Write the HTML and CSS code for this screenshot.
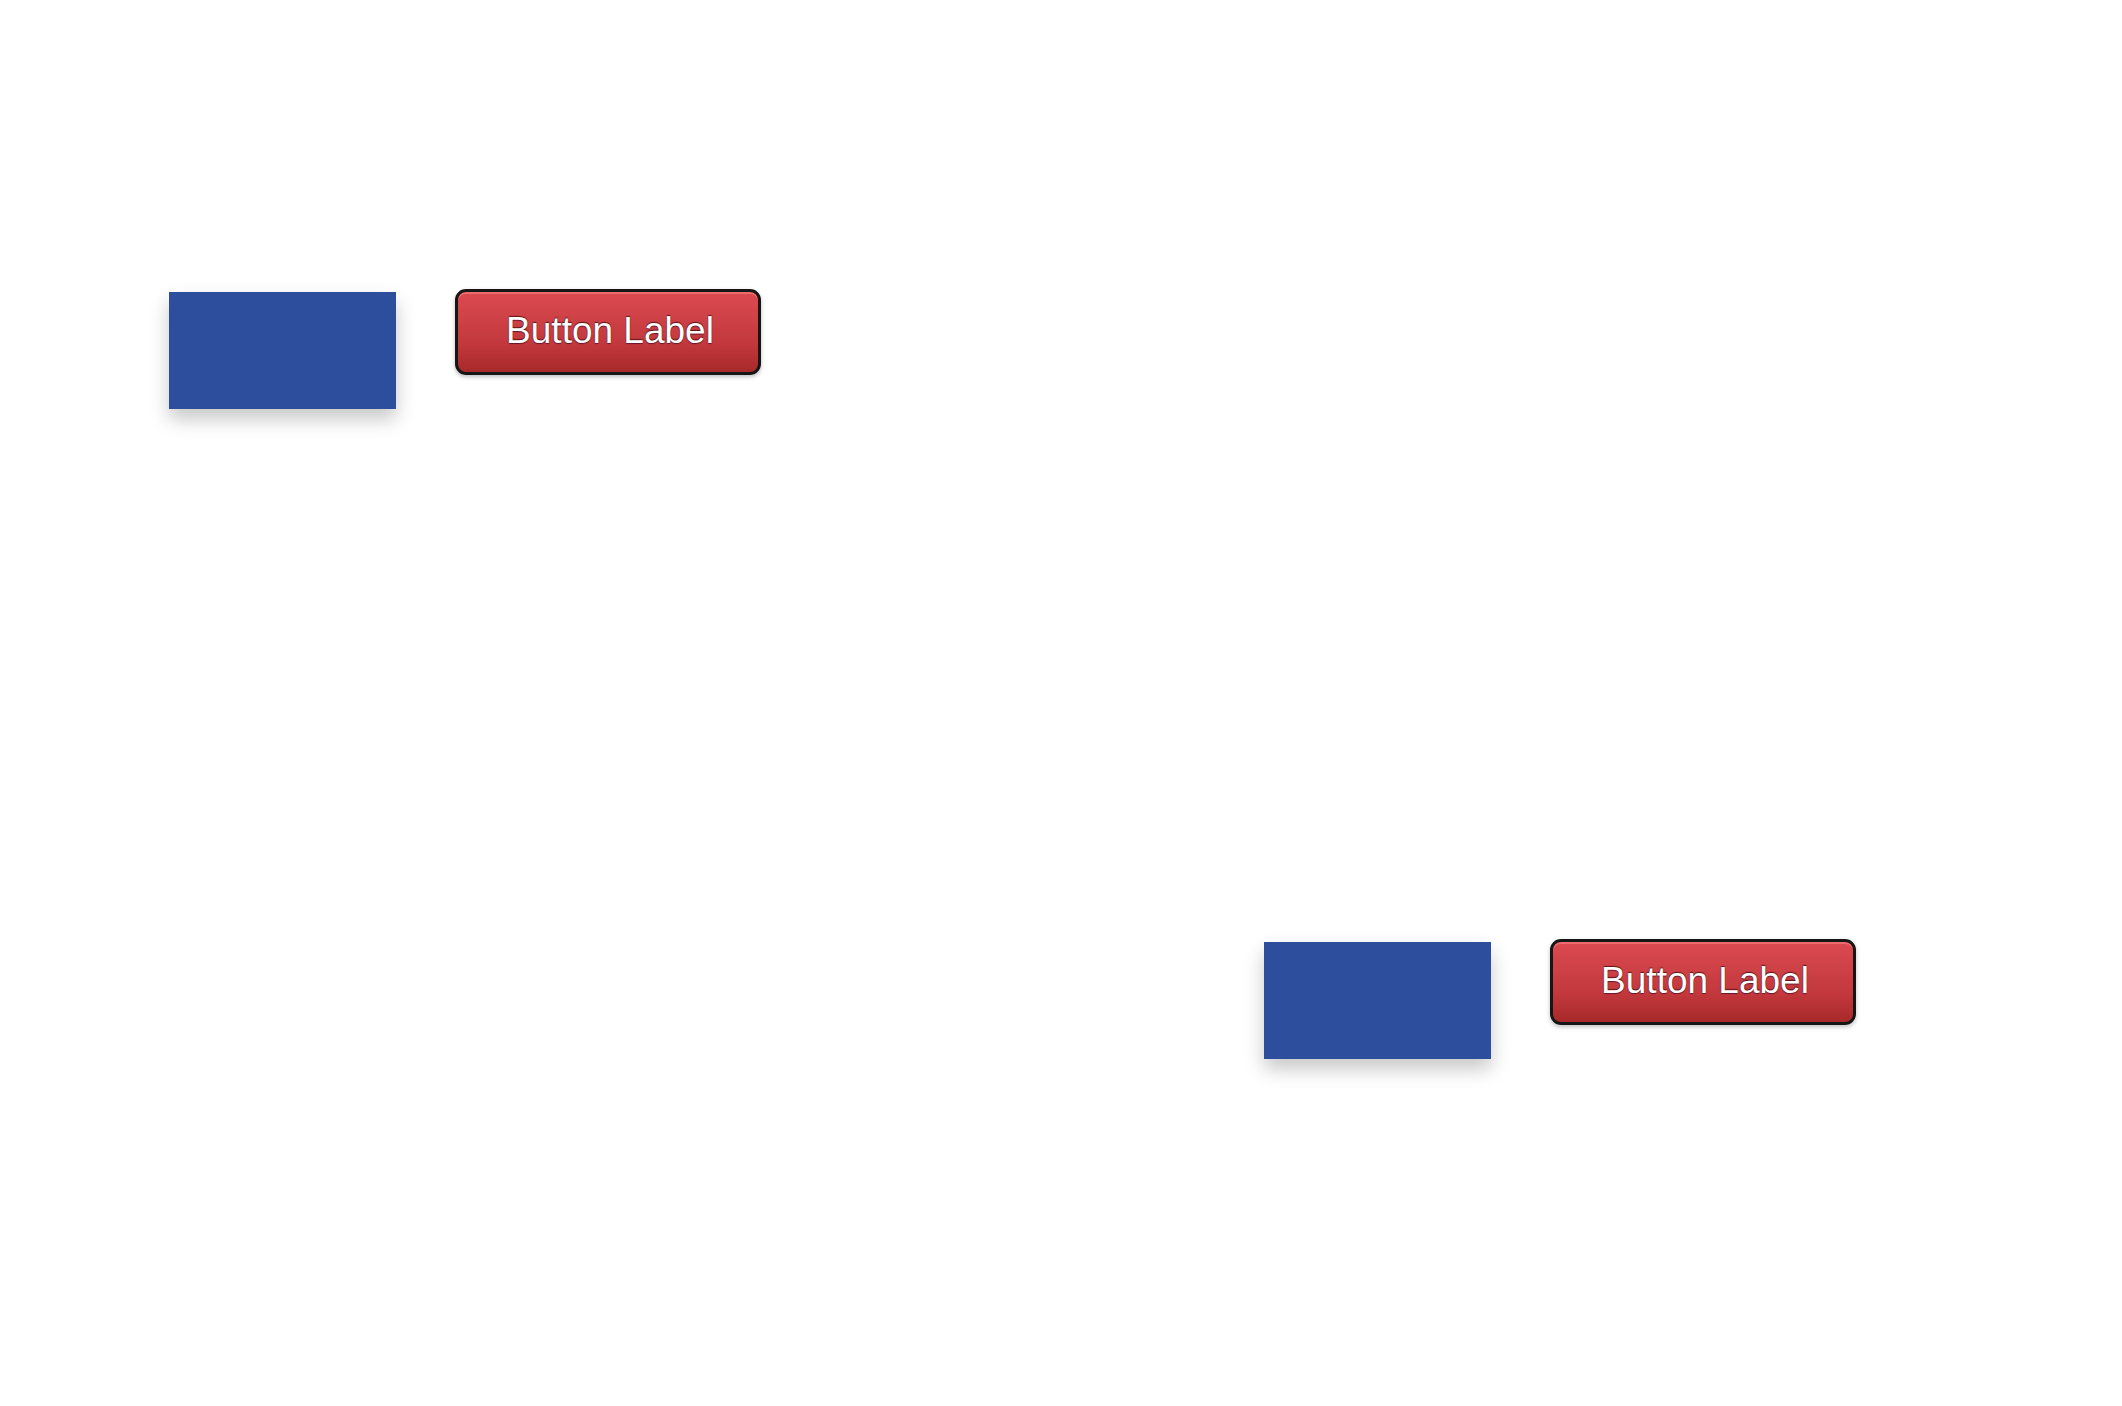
FILE: index.html
```html
<!DOCTYPE html>
<html>
<head>
<meta charset="utf-8">
<link rel="stylesheet" href="styles.css">
</head>
<body>
<div class="canvas">
  <div class="group group-one">
    <div class="tile"></div>
    <button class="red-btn">Button Label</button>
  </div>
  <div class="group group-two">
    <div class="tile"></div>
    <button class="red-btn">Button Label</button>
  </div>
</div>
</body>
</html>
```

FILE: styles.css
```css
html, body {
  margin: 0;
  padding: 0;
  background: #ffffff;
}
.canvas {
  width: 2122px;
  height: 1406px;
  display: flex;
  flex-direction: column;
  padding-top: 289px;
  box-sizing: border-box;
}
.group {
  display: flex;
  align-items: flex-start;
  gap: 59px;
}
.group-one {
  margin-left: 169px;
}
.group-two {
  margin-left: 1264px;
  margin-top: 530px;
}
.tile {
  width: 227px;
  height: 117px;
  margin-top: 3px;
  background: #2d4e9c;
  box-shadow: 0 10px 18px rgba(0, 0, 0, 0.22);
}
.red-btn {
  width: 306px;
  height: 86px;
  box-sizing: border-box;
  border: 3px solid #161616;
  border-radius: 11px;
  background: linear-gradient(to bottom, #dc4950 0%, #cf4248 30%, #c2383c 65%, #a8292a 100%);
  box-shadow: inset 0 2px 0 rgba(255, 140, 140, 0.5), 0 2px 4px rgba(0, 0, 0, 0.25);
  color: #ffffff;
  font-family: "Liberation Sans", Arial, sans-serif;
  font-size: 37px;
  text-align: center;
  text-shadow: 0 -1px 1px rgba(40, 0, 0, 0.7), 0 1px 1px rgba(40, 0, 40, 0.6);
  padding: 0 0 2px 4px;
  margin: 0;
  cursor: pointer;
}
```
